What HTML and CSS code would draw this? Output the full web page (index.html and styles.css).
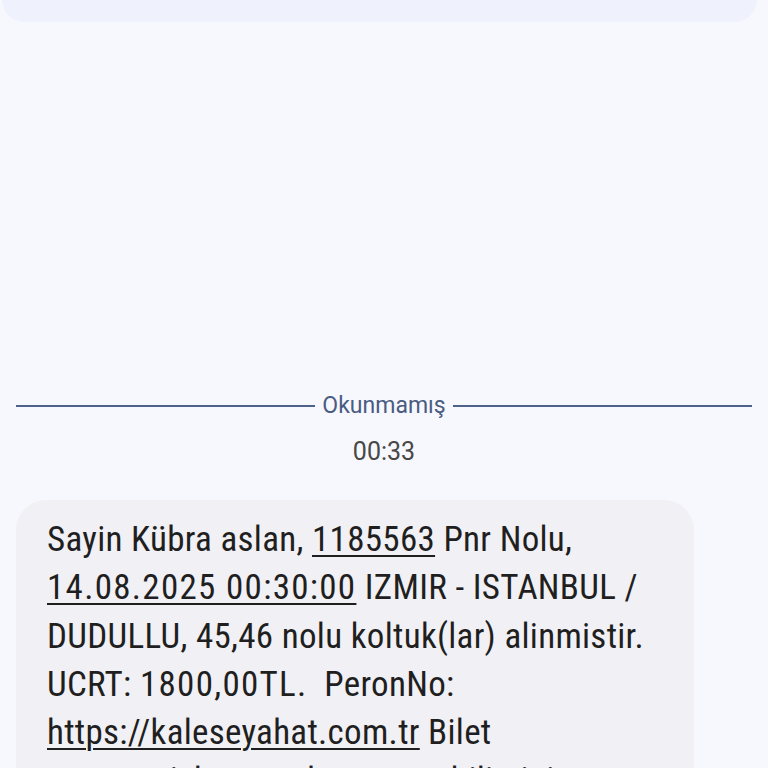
FILE: index.html
```html
<!DOCTYPE html>
<html lang="tr">
<head>
<meta charset="utf-8">
<link rel="stylesheet" href="styles.css">
</head>
<body>
<div class="top-card"></div>
<div class="divider"><span class="rule"></span><span class="label">Okunmamış</span><span class="rule"></span></div>
<div class="time">00:33</div>
<div class="bubble">
<p class="msg">Sayin Kübra aslan, <u>1185563</u> Pnr Nolu,<br><u class="wide">14.08.2025 00:30:00</u> IZMIR - ISTANBUL /<br>DUDULLU, 45,46 nolu koltuk(lar) alinmistir.<br>UCRT: <span class="wide">1800,00TL.</span>&nbsp; PeronNo:<br><u>https://kaleseyahat.com.tr</u> Bilet<br>numaranizla sorgulama yapabilirsiniz.</p>
</div>
</body>
</html>
```
FILE: styles.css
```css
html, body {
  margin: 0;
  padding: 0;
  background: #f7f8fd;
  font-family: Roboto, "Noto Sans", sans-serif;
  overflow: hidden;
  height: 768px;
}
.top-card {
  height: 22px;
  margin-left: 2px;
  width: 755px;
  background: #eff2fd;
  border-radius: 0 0 22px 22px;
}
.divider {
  margin: 370px 16px 0 16px;
  display: flex;
  align-items: center;
  gap: 7px;
  height: 28px;
}
.rule {
  flex: 1;
  height: 2px;
  background: #4d6389;
}
.label {
  font-size: 23px;
  line-height: 28px;
  color: #4a5b82;
}
.time {
  margin-top: 17px;
  text-align: center;
  font-size: 25px;
  line-height: 30px;
  color: #474747;
}
.bubble {
  margin: 33px 0 0 16px;
  width: 678px;
  background: #f1f0f5;
  border-radius: 30px;
  padding: 16px 0 24px 31px;
  box-sizing: border-box;
}
.msg {
  margin: 0;
  font-family: "Roboto Condensed", Roboto, sans-serif;
  font-size: 35px;
  letter-spacing: 0.3px;
  line-height: 48.3px;
  color: #1f1f1f;
  white-space: nowrap;
}
.msg u {
  text-decoration-thickness: 2px;
  text-underline-offset: 4px;
}
.msg .wide {
  letter-spacing: 1.3px;
}
```
